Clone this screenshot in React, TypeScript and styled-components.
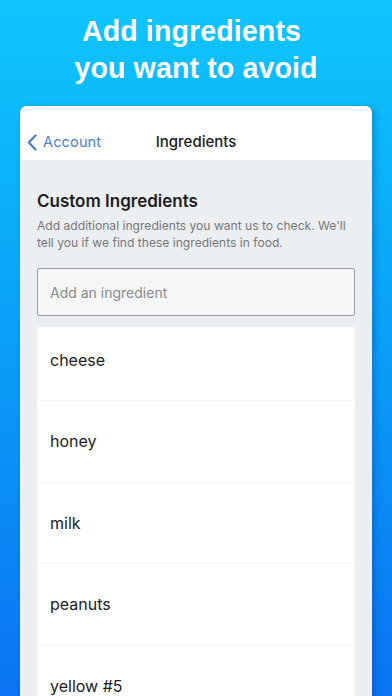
import React from "react";
import styled, { createGlobalStyle } from "styled-components";

const Global = createGlobalStyle`
  html, body { margin: 0; padding: 0; }
  body {
    width: 392px;
    height: 696px;
    overflow: hidden;
    font-family: Inter, "Liberation Sans", Arial, sans-serif;
    -webkit-font-smoothing: antialiased;
  }
`;

const Page = styled.div`
  width: 392px;
  height: 696px;
  overflow: hidden;
  display: flex;
  flex-direction: column;
  align-items: center;
  background: linear-gradient(180deg, #0ec6fc 0%, #0aa2f8 45%, #0a73f3 100%);
`;

const Headline = styled.h1`
  margin: 13px 0 0;
  font-family: "Liberation Sans", Arial, sans-serif;
  font-weight: 700;
  font-size: 28.6px;
  line-height: 37px;
  color: #ffffff;
  text-align: center;
  letter-spacing: 0.1px;
`;

const HeadLine1 = styled.span`
  display: block;
  margin-right: 9px;
`;

const Card = styled.div`
  margin-top: 19px;
  width: 352px;
  flex: 1;
  min-height: 0;
  border-radius: 7px 7px 0 0;
  background: #eceff1;
  box-shadow: 3px 2px 6px rgba(0, 40, 120, 0.28);
  display: flex;
  flex-direction: column;
  overflow: hidden;
`;

const NavBar = styled.div`
  flex-shrink: 0;
  height: 54px;
  background: #ffffff;
  display: grid;
  grid-template-columns: 1fr auto 1fr;
  align-items: end;
  padding: 0 6px 8px;
  box-sizing: border-box;
`;

const BackButton = styled.div`
  display: flex;
  align-items: center;
  gap: 6px;
  height: 20px;
  color: #4a7fd4;
  font-size: 14.6px;
  letter-spacing: 0.1px;
  padding-left: 1px;
`;

const NavTitle = styled.div`
  height: 20px;
  line-height: 20px;
  font-size: 15px;
  font-weight: 500;
  color: #1c1c1e;
`;

const Content = styled.div`
  flex-shrink: 0;
  padding: 30px 17px 0;
  display: flex;
  flex-direction: column;
`;

const SectionTitle = styled.h2`
  margin: 0;
  font-size: 17px;
  line-height: 22px;
  font-weight: 600;
  color: #1d1d1f;
`;

const Description = styled.p`
  margin: 4.5px 0 0;
  font-size: 12.1px;
  line-height: 17px;
  color: #76787b;
`;

const Input = styled.input`
  margin-top: 17.5px;
  height: 48px;
  box-sizing: border-box;
  border: 1px solid #9d9fa1;
  border-radius: 2px;
  background: #f5f6f7;
  padding: 0 12px;
  font-family: inherit;
  font-size: 14px;
  color: #333;
  outline: none;
  &::placeholder { color: #8a8c8f; }
`;

const List = styled.div`
  margin-top: 11px;
  background: #ffffff;
  display: flex;
  flex-direction: column;
`;

const Row = styled.div<{ $height: number; $offset: number; $divider: boolean }>`
  height: ${(p) => p.$height}px;
  box-sizing: border-box;
  display: flex;
  align-items: center;
  padding: 0 13px ${(p) => p.$offset}px;
  border-top: ${(p) => (p.$divider ? "1px solid #f3f4f5" : "none")};
  font-size: 16px;
  color: #202124;
  flex-shrink: 0;
`;

const items = ["cheese", "honey", "milk", "peanuts", "yellow #5"];

export default function App() {
  return (
    <Page>
      <Global />
      <Headline>
        <HeadLine1>Add ingredients</HeadLine1>
        you want to avoid
      </Headline>
      <Card>
        <NavBar>
          <BackButton>
            <svg width="10" height="17" viewBox="0 0 10 17" fill="none">
              <path d="M8.5 1.5 L1.8 8.5 L8.5 15.5" stroke="#4a7fd4" strokeWidth="2.2" strokeLinecap="round" strokeLinejoin="round" />
            </svg>
            Account
          </BackButton>
          <NavTitle>Ingredients</NavTitle>
          <div />
        </NavBar>
        <Content>
          <SectionTitle>Custom Ingredients</SectionTitle>
          <Description>
            Add additional ingredients you want us to check. We'll tell you if we find these ingredients in food.
          </Description>
          <Input placeholder="Add an ingredient" />
          <List>
            {items.map((it, i) => (
              <Row key={it} $height={i === 0 ? 73 : 81.5} $offset={i === 0 ? 7 : 0} $divider={i > 0}>
                {it}
              </Row>
            ))}
          </List>
        </Content>
      </Card>
    </Page>
  );
}
